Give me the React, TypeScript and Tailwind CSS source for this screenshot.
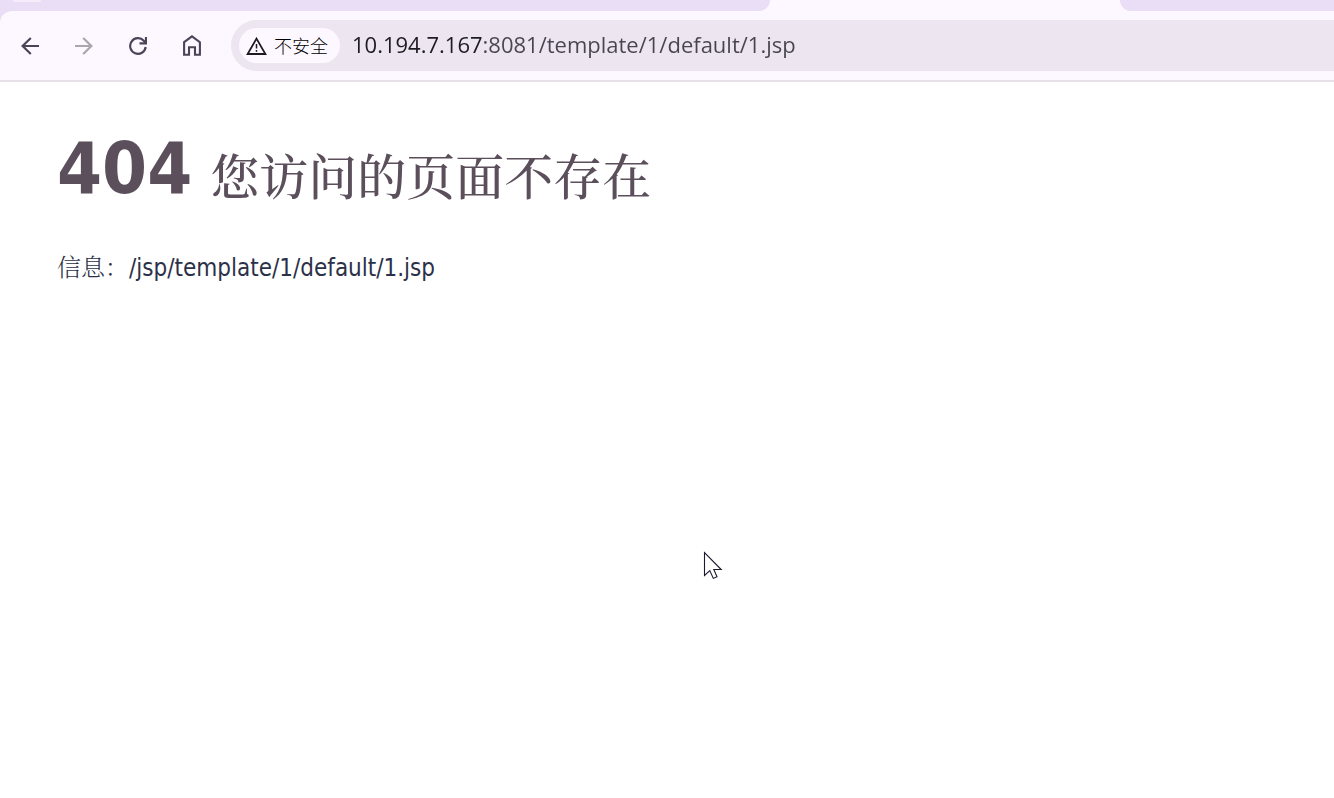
import { useState } from "react";

function BackIcon() {
  return (
    <svg width="18" height="18" viewBox="0 0 18 18" fill="none" stroke="currentColor" strokeWidth="2.2" aria-hidden="true">
      <path d="M18 9H2M9.8 1L1.6 9L9.8 17" />
    </svg>
  );
}

function ForwardIcon() {
  return (
    <svg width="18" height="18" viewBox="0 0 18 18" fill="none" stroke="currentColor" strokeWidth="2.2" aria-hidden="true">
      <path d="M0 9H16M8.2 1L16.4 9L8.2 17" />
    </svg>
  );
}

function ReloadIcon() {
  return (
    <svg width="18" height="18" viewBox="0 0 18 18" fill="none" stroke="currentColor" strokeWidth="2.2" aria-hidden="true">
      <path d="M16.7 10A7.8 7.8 0 1 1 14.8 3.8L16.5 5.8" />
      <path d="M17 0V6.4H10.5" />
    </svg>
  );
}

function HomeIcon() {
  return (
    <svg width="18" height="21" viewBox="0 0 18 21" fill="none" stroke="currentColor" strokeWidth="2.1" aria-hidden="true">
      <path d="M1.1 7.2L9 1.4L16.9 7.2V19.7H12V12.3H6V19.7H1.1Z" />
    </svg>
  );
}

function WarningIcon() {
  return (
    <svg width="21" height="18" viewBox="0 0 21 18" fill="none" stroke="currentColor" strokeWidth="1.8" aria-hidden="true">
      <path d="M10.5 1.6L19.4 17H1.6Z" />
      <path strokeWidth="1.5" d="M10.5 7V11.5M10.5 13V14.8" />
    </svg>
  );
}

function TabStrip() {
  return (
    <div className="flex h-[11px] bg-[#fdf7ff]">
      <div className="h-full w-[770px] overflow-hidden rounded-br-[14px] bg-[#eaddf6] px-[13px]">
        <div className="h-[2px] w-7 rounded-b-full bg-[#f6edfb]" />
      </div>
      <div className="w-[350px]" />
      <div className="h-full flex-1 rounded-bl-[14px] bg-[#eaddf6]" />
    </div>
  );
}

function Toolbar() {
  const [url, setUrl] = useState("10.194.7.167:8081/template/1/default/1.jsp");
  return (
    <div className="bg-[#eaddf6]">
      <div className="flex items-center rounded-tl-xl border-b-2 border-[#e7e0e8] bg-[#fdf7ff] pt-[9px] pb-[9px] pl-[3px] text-[#4a4458]">
        <nav className="flex">
          <button aria-label="后退" className="flex h-[51px] w-[54px] items-center justify-center">
            <BackIcon />
          </button>
          <button aria-label="前进" disabled className="flex h-[51px] w-[54px] items-center justify-center text-[#aaa5ae]">
            <ForwardIcon />
          </button>
          <button aria-label="重新加载" className="flex h-[51px] w-[54px] items-center justify-center">
            <ReloadIcon />
          </button>
          <button aria-label="主页" className="flex h-[51px] w-[54px] items-center justify-center">
            <HomeIcon />
          </button>
        </nav>
        <div className="ml-3 flex h-[51px] flex-1 items-center rounded-l-full bg-[#ede6f1] pl-2">
          <button className="flex h-[35px] w-[101px] items-center gap-[7px] rounded-full bg-[#fdf7ff] pl-[7px] text-[18px] leading-6 whitespace-nowrap text-[#1d1b20]">
            <WarningIcon />
            <span className="pt-[2px] font-light text-black">不安全</span>
          </button>
          <input
            aria-label="地址"
            value={url}
            onChange={(e) => setUrl(e.target.value)}
            spellCheck={false}
            className="ml-3 h-8 min-w-0 flex-1 bg-[linear-gradient(to_right,#1d1b20_130px,#49454f_130px)] bg-clip-text pb-[2px] font-['Open_Sans','Noto_Sans',sans-serif] text-[22px] text-transparent caret-[#1d1b20] outline-none"
          />
        </div>
      </div>
    </div>
  );
}

function MousePointer() {
  return (
    <svg className="absolute top-[551px] left-[703px]" width="20" height="29" viewBox="0 0 20 29" fill="#fff" stroke="#1c1830" strokeWidth="1.1" aria-hidden="true">
      <path d="M1.5 1.5V24.5L6.8 19.6L10.3 27.4L14 25.8L10.8 18.5H18.2Z" />
    </svg>
  );
}

export default function App() {
  return (
    <div className="relative min-h-screen bg-white font-['Liberation_Sans','Noto_Sans_CJK_SC',sans-serif]">
      <header>
        <TabStrip />
        <Toolbar />
      </header>
      <main className="px-[57px] pt-9">
        <h1 className="flex items-center gap-[18px] text-[#5c4f5c]">
          <span className="font-['DejaVu_Sans_Condensed','DejaVu_Sans',sans-serif] text-[72px] leading-[100px] font-bold">404</span>
          <span className="pt-3 font-['Noto_Serif_CJK_SC','Noto_Sans_CJK_SC',serif] text-[49px] leading-[72px] font-medium">您访问的页面不存在</span>
        </h1>
        <p className="mt-[30px] flex items-baseline text-[24px] leading-9 text-[#2b3148]">
          <span className="font-['Noto_Serif_CJK_SC','Noto_Sans_CJK_SC',serif] font-light">信息：</span>
          <span className="font-['DejaVu_Sans_Condensed','Noto_Sans',sans-serif]">/jsp/template/1/default/1.jsp</span>
        </p>
      </main>
      <MousePointer />
    </div>
  );
}
